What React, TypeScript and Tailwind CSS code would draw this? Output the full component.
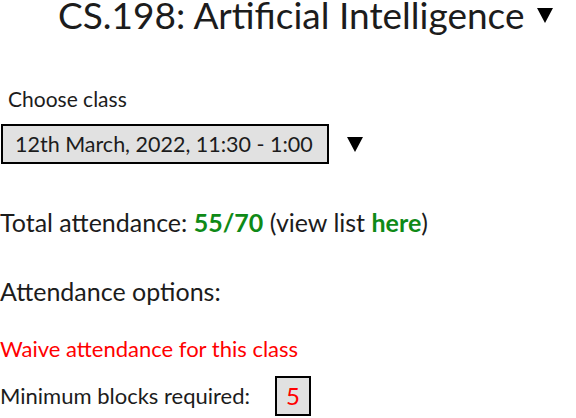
import React from "react";

function Tri({ className }: { className?: string }) {
  return (
    <svg viewBox="0 0 16 15" className={className}>
      <polygon points="0,0 16,0 8,15" fill="#000" />
    </svg>
  );
}

export default function App() {
  return (
    <div className="w-[576px] h-[418px] bg-white text-[#1c1c1c] overflow-hidden" style={{ fontFamily: "Lato, 'Noto Sans', sans-serif" }}>
      <div className="flex items-start pl-[58px] h-[30px]">
        <h1 className="text-[37px] leading-[38px] -mt-[4px] whitespace-nowrap">CS.198: Artificial Intelligence</h1>
        <Tri className="w-[16px] h-[15px] ml-[13px] mt-[8px] shrink-0" />
      </div>
      <div className="pl-[8px] mt-[58px] text-[21px] leading-[21px]">Choose class</div>
      <div className="flex items-center mt-[15px]">
        <div className="ml-[1px] w-[328px] h-[40px] border-2 border-black bg-[#e1e1e1] flex items-center pl-[12px] pt-[2px] text-[21.5px] leading-none whitespace-nowrap">
          12th March, 2022, 11:30 - 1:00
        </div>
        <Tri className="w-[16px] h-[15px] ml-[18px] mt-[1px]" />
      </div>
      <div className="mt-[46px] text-[25px] leading-[25px] whitespace-nowrap">
        Total attendance: <span className="font-bold text-[#0f8a17]">55/70</span> (view list{" "}
        <span className="font-bold text-[#0f8a17]">here</span>)
      </div>
      <div className="mt-[44px] text-[25px] leading-[25px]">Attendance options:</div>
      <div className="mt-[34px] text-[22px] leading-[22px] text-[#ff0000]">Waive attendance for this class</div>
      <div className="flex items-center mt-[16px]">
        <span className="text-[22px] leading-none">Minimum blocks required:</span>
        <div className="ml-[25px] w-[36px] h-[40px] border-2 border-black bg-[#e1e1e1] flex items-center justify-center text-[24px] leading-none text-[#ff0000]">5</div>
      </div>
    </div>
  );
}
